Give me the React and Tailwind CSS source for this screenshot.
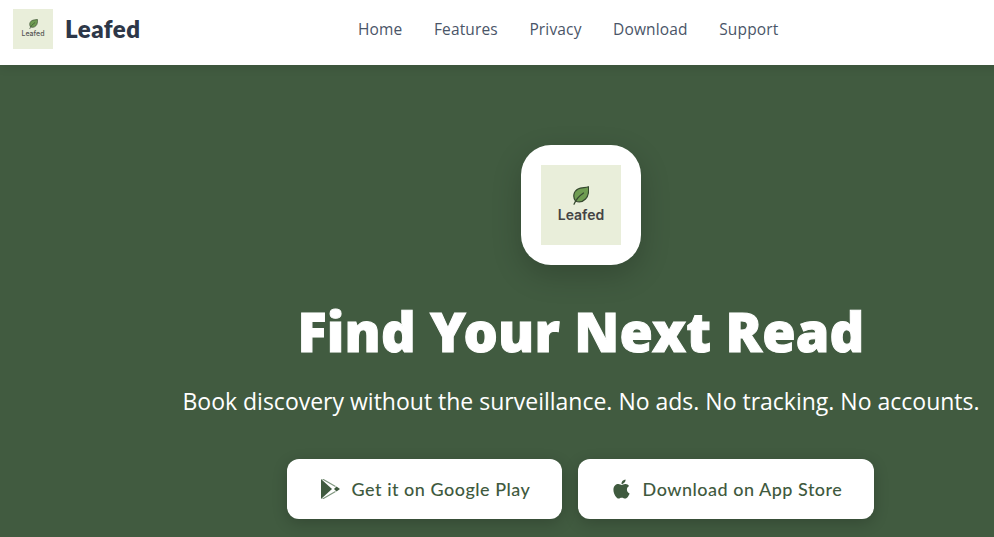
import React from "react";
import { FaApple } from "react-icons/fa";

const NAV_LINKS = ["Home", "Features", "Privacy", "Download", "Support"];

const LeafMark = ({ className }) => (
  <svg viewBox="0 0 16 19" className={className}>
    <path d="M2.500 15C-0.500 11 0.500 5.500 5 3 8.500 1.200 12.500 2 15.400 0.700c.6 4.800.1 9.300-2.900 12.300-3 3-7 3.500-10 2z" fill="#6f9c52" stroke="#35482f" strokeWidth="1.200" strokeLinejoin="round" />
    <path d="M1 18.300C3 13.500 6 10 10.500 7" fill="none" stroke="#35482f" strokeWidth="1.200" strokeLinecap="round" />
  </svg>
);

const PlayIcon = () => (
  <svg viewBox="0 0 19 20" className="h-5 w-[19px] shrink-0">
    <path d="M0 0L11 10 0 20z" fill="#3f5a3e" />
    <path d="M1.500 0L14.500 7.500M1.500 20L14.500 12.500" fill="none" stroke="#7f967e" strokeWidth="1.200" />
    <path d="M13 10l2.500-2.500L19 10l-3.500 2.500z" fill="#3f5a3e" />
  </svg>
);

const StoreButton = ({ icon, label, width }) => (
  <button className={`flex h-[60px] ${width} items-center justify-center gap-3 rounded-xl bg-white pl-0.5 text-[18px] font-medium tracking-[0.5px] text-[#3f5a3e] shadow-[0_4px_15px_rgba(0,0,0,0.2)] [font-family:Lato,sans-serif]`}>
    {icon}
    {label}
  </button>
);

export default function App() {
  return (
    <div className="h-[537px] w-[994px] overflow-hidden bg-[#415b40] [font-family:'Open_Sans',sans-serif]">
      <div className="w-[1162px]">
        <header className="relative z-10 flex h-[65px] items-center bg-white pb-2 shadow-[0_2px_10px_rgba(0,0,0,0.1)]">
          <div className="flex w-[358px] items-center gap-3 pl-[13px]">
            <div className="flex h-10 w-10 flex-col items-center justify-center bg-[#e9eeda]">
              <LeafMark className="h-[10px] w-[9px]" />
              <span className="text-[7px] leading-[9px] font-medium text-[#555] [font-family:Inter,sans-serif]">Leafed</span>
            </div>
            <span className="text-[24px] font-extrabold tracking-[0.5px] text-[#2d3748] [font-family:Lato,sans-serif]">Leafed</span>
          </div>
          <nav className="flex translate-y-px gap-[31.5px] text-[15.5px] font-medium tracking-[0.15px] text-[#4a5568]">
            {NAV_LINKS.map((link) => (
              <a key={link} href="#">{link}</a>
            ))}
          </nav>
        </header>

        <main className="flex flex-col items-center pt-20 text-white">
          <div className="flex h-[120px] w-[120px] items-center justify-center rounded-[30px] bg-white shadow-[0_10px_30px_rgba(0,0,0,0.2)]">
            <div className="flex h-20 w-20 flex-col items-center justify-center bg-[#e9eeda] pb-0.5">
              <LeafMark className="h-[19px] w-4" />
              <span className="mt-px text-[14px] leading-[17px] font-semibold text-[#444] [font-family:Inter,sans-serif]">Leafed</span>
            </div>
          </div>
          <h1 className="mt-7 text-[54px] leading-[76px] font-black tracking-[0.2px] whitespace-nowrap [-webkit-text-stroke:1px_white] [font-family:'Noto_Sans',sans-serif]">Find Your Next Read</h1>
          <p className="mt-4 text-[23px] leading-[32px] whitespace-nowrap">Book discovery without the surveillance. No ads. No tracking. No accounts.</p>
          <div className="mt-[42px] flex gap-4 pr-px">
            <StoreButton icon={<PlayIcon />} label="Get it on Google Play" width="w-[275px]" />
            <StoreButton icon={<FaApple className="h-[22px] w-[19px]" />} label="Download on App Store" width="w-[296px]" />
          </div>
        </main>
      </div>
    </div>
  );
}
